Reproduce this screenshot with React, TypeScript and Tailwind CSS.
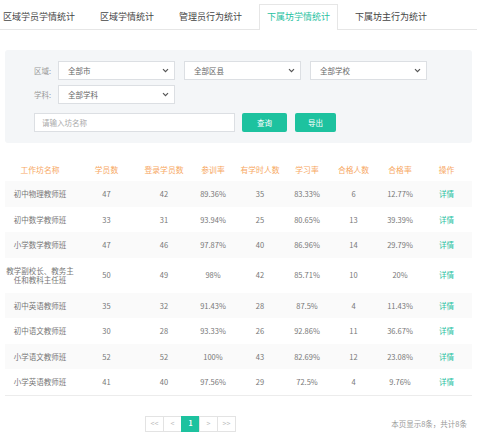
import React from "react";

const tabs = ["区域学员学情统计", "区域学情统计", "管理员行为统计", "下属坊学情统计", "下属坊主行为统计"];

const heads = ["工作坊名称", "学员数", "登录学员数", "参训率", "有学时人数", "学习率", "合格人数", "合格率", "操作"];

const rows = [
  ["初中物理教师班", "47", "42", "89.36%", "35", "83.33%", "6", "12.77%"],
  ["初中数学教师班", "33", "31", "93.94%", "25", "80.65%", "13", "39.39%"],
  ["小学数学教师班", "47", "46", "97.87%", "40", "86.96%", "14", "29.79%"],
  ["教学副校长、教务主任和教科主任班", "50", "49", "98%", "42", "85.71%", "10", "20%"],
  ["初中英语教师班", "35", "32", "91.43%", "28", "87.5%", "4", "11.43%"],
  ["初中语文教师班", "30", "28", "93.33%", "26", "92.86%", "11", "36.67%"],
  ["小学语文教师班", "52", "52", "100%", "43", "82.69%", "12", "23.08%"],
  ["小学英语教师班", "41", "40", "97.56%", "29", "72.5%", "4", "9.76%"],
];

const Chevron = () => (
  <svg width="7" height="5" viewBox="0 0 7 5" className="shrink-0">
    <path d="M1 1.2 L3.5 3.7 L6 1.2" fill="none" stroke="#555" strokeWidth="1.2" />
  </svg>
);

const Select = ({ label }: { label: string }) => (
  <div className="flex h-[19px] w-[117px] items-center justify-between border border-[#dcdfe3] bg-white pl-[9px] pr-[5px] text-[7.5px] text-[#666]">
    <span>{label}</span>
    <Chevron />
  </div>
);

export default function App() {
  return (
    <div className="h-[436px] w-[477px] overflow-hidden bg-white font-['Noto_Sans_CJK_SC','Noto_Sans',sans-serif] text-[#777]">
      {/* tabs */}
      <div className="flex h-[30px] items-end border-b border-[#e6e6e6]">
        <div className="-ml-[5px] -mb-px flex gap-[9px]">
          {tabs.map((t, i) =>
            i === 3 ? (
              <div
                key={t}
                className="flex h-[26px] items-center border border-b-0 border-[#e6e6e6] bg-white px-[7px] pb-[1px] text-[9px] text-[#1fc19f]"
              >
                {t}
              </div>
            ) : (
              <div key={t} className="flex h-[26px] items-center border border-transparent px-[7px] pb-[1px] text-[9px] text-[#444]">
                {t}
              </div>
            )
          )}
        </div>
      </div>

      {/* filters */}
      <div className="mx-[5px] mt-[20px] flex h-[93px] flex-col gap-[5px] rounded-[3px] bg-[#f4f6f8] pl-[29px] pt-[11px] text-[7.5px]">
        <div className="flex items-center">
          <span className="w-[24px] text-[#999]">区域:</span>
          <div className="flex gap-[9px]">
            <Select label="全部市" />
            <Select label="全部区县" />
            <Select label="全部学校" />
          </div>
        </div>
        <div className="flex items-center">
          <span className="w-[24px] text-[#999]">学科:</span>
          <Select label="全部学科" />
        </div>
        <div className="mt-[4px] flex items-center">
          <div className="flex h-[19px] w-[201px] items-center border border-[#dcdfe3] bg-white pl-[7px] text-[#aaa]">请输入坊名称</div>
          <button className="ml-[7px] h-[19px] w-[45px] rounded-[2px] bg-[#1dc29f] text-white">查询</button>
          <button className="ml-[8px] h-[19px] w-[41px] rounded-[2px] bg-[#1dc29f] text-white">导出</button>
        </div>
      </div>

      {/* table */}
      <div className="mx-[5px] mt-[15px] border-b border-[#ececec] text-[7.5px]">
        <div className="grid h-[23px] grid-cols-[70px_63px_52px_46px_48px_46px_47px_46px_47px] items-center text-center text-[7.8px] text-[#f7a863]">
          {heads.map((h) => (
            <div key={h}>{h}</div>
          ))}
        </div>
        {rows.map((r, i) => (
          <div
            key={r[0]}
            className={`grid grid-cols-[70px_63px_52px_46px_48px_46px_47px_46px_47px] items-center text-center leading-[9.5px] ${
              i === 3 ? "h-[35px]" : "h-[25.5px]"
            } ${i % 2 === 0 ? "bg-[#fafafa]" : "bg-white"}`}
          >
            {r.map((c, j) => (
              <div key={j} className={j === 0 ? "px-[1px]" : ""}>
                {c}
              </div>
            ))}
            <div className="text-[#1fc19f]">详情</div>
          </div>
        ))}
      </div>

      {/* pagination */}
      <div className="mt-[20px] flex items-center pr-[10px]">
        <div className="ml-[145px] flex text-[7px] text-[#bbb]">
          {["<<", "<", "1", ">", ">>"].map((p, i) => (
            <div
              key={p}
              className={`flex h-[16px] w-[19px] items-center justify-center border ${
                i === 0 ? "" : "-ml-px"
              } ${p === "1" ? "border-[#1dc29f] bg-[#1dc29f] font-bold text-white" : "border-[#e3e3e3] bg-white"}`}
            >
              {p}
            </div>
          ))}
        </div>
        <div className="ml-auto text-[7.5px] text-[#999]">本页显示8条，共计8条</div>
      </div>
    </div>
  );
}
